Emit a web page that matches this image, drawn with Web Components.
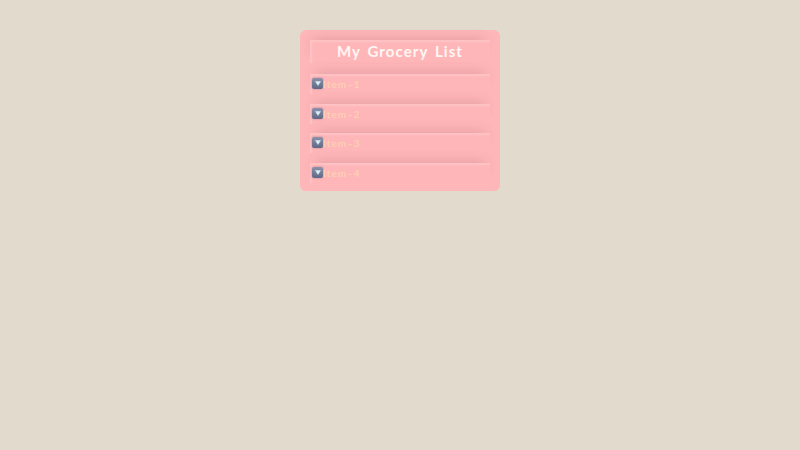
<!DOCTYPE html>
<html>
<head>
<meta charset="utf-8">
<title>My Grocery List</title>
<style>
html, body { margin: 0; height: 100%; background: #e2dbcd; }
body { font-family: "Lato", sans-serif; }
</style>
</head>
<body>
<grocery-list>
    <span slot="title">My Grocery List</span>
    <grocery-item>Item - 1</grocery-item>
    <grocery-item>Item - 2</grocery-item>
    <grocery-item>Item - 3</grocery-item>
    <grocery-item>Item - 4</grocery-item>
</grocery-list>

<script>
class GroceryList extends HTMLElement {
    constructor() {
        super();
        this.shadow = this.attachShadow({mode: "open"});
    }
    connectedCallback() {
        this.shadow.innerHTML = `
<style>
:host {
    display: block;
    width: 180px;
    margin: 30px auto 0;
    padding: 10px 10px 8px;
    border-radius: 6px;
    background: #ffb6b9;
}
.title {
    height: 23px;
    margin-bottom: 11px;
    text-align: center;
    font-size: 15px;
    line-height: 23px;
    font-weight: 700;
    letter-spacing: 1.1px;
    word-spacing: 2px;
    color: #fff6f4;
    box-shadow: -2px -6px 12px -5px rgba(120, 70, 70, .22), inset 2px 2px 2px rgba(255, 205, 205, .6);
}
.items { display: flex; flex-direction: column; gap: 9.67px; }
</style>
<div class="title"><slot name="title"></slot></div>
<div class="items"><slot></slot></div>
`;
    }
}
customElements.define("grocery-list", GroceryList);

class GroceryItem extends HTMLElement {
    constructor() {
        super();
        this.shadow = this.attachShadow({mode: "open"});
    }
    connectedCallback() {
        this.shadow.innerHTML = `
<style>
:host {
    display: flex;
    align-items: flex-start;
    height: 20px;
    box-shadow: 0 -7px 12px -6px rgba(120, 70, 70, .26), inset 2px 2px 2px rgba(255, 205, 205, .6);
    font-size: 10px;
    font-weight: 700;
    line-height: 20px;
    letter-spacing: 1px;
    word-spacing: -2.5px;
    color: #fdd0b4;
}
.toggle {
    width: 11px;
    height: 11px;
    margin: 4px 0 0 2px;
    flex: none;
    border-radius: 2px;
    background: linear-gradient(#8d92aa, #5f6784);
    box-shadow: 0 0 2px rgba(80, 80, 110, .5);
    display: flex;
    align-items: center;
    justify-content: center;
}
svg { display: block; }
</style>
<div class="toggle"><svg width="6" height="5" viewBox="0 0 6 5"><path d="M.5 .5H5.5L3 4.5Z" fill="#d8eef8" stroke="#d8eef8" stroke-width=".5" stroke-linejoin="round"/></svg></div>
<span class="label"><slot></slot></span>
`;
    }
}
customElements.define("grocery-item", GroceryItem);
</script>
</body>
</html>
